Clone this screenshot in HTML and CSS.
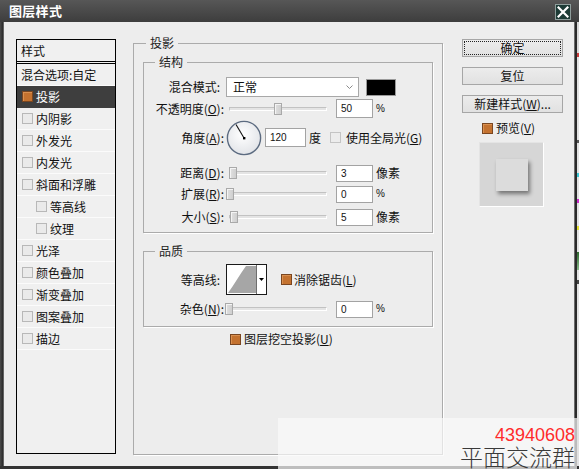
FILE: index.html
```html
<!DOCTYPE html>
<html lang="zh-CN">
<head>
<meta charset="utf-8">
<title>图层样式</title>
<link rel="stylesheet" href="styles.css">
</head>
<body>
<div class="window">
  <header class="titlebar">
    <span class="title">图层样式</span>
    <span class="close"><svg width="12" height="12" viewBox="0 0 12 12"><path d="M1.5 1.5 L10.5 10.5 M10.5 1.5 L1.5 10.5" stroke="#fff" stroke-width="2.2" stroke-linecap="square"/></svg></span>
  </header>
  <div class="frame-row">
    <div class="frame-left"></div>
    <div class="dialog">
      <div class="styles-list">
        <div class="list-head">样式</div>
        <div class="list-item plain">混合选项:自定</div>
        <div class="list-item selected"><span class="cb on"></span>投影</div>
        <div class="list-item"><span class="cb"></span>内阴影</div>
        <div class="list-item"><span class="cb"></span>外发光</div>
        <div class="list-item"><span class="cb"></span>内发光</div>
        <div class="list-item"><span class="cb"></span>斜面和浮雕</div>
        <div class="list-item sub"><span class="cb"></span>等高线</div>
        <div class="list-item sub"><span class="cb"></span>纹理</div>
        <div class="list-item"><span class="cb"></span>光泽</div>
        <div class="list-item"><span class="cb"></span>颜色叠加</div>
        <div class="list-item"><span class="cb"></span>渐变叠加</div>
        <div class="list-item"><span class="cb"></span>图案叠加</div>
        <div class="list-item"><span class="cb"></span>描边</div>
      </div>

      <fieldset class="group drop">
        <legend>投影</legend>
        <fieldset class="group inner struct">
          <legend>结构</legend>
          <div class="row r-blend">
            <span class="lbl lbl-short">混合模式:</span>
            <div class="select"><span>正常</span><svg width="7" height="5" viewBox="0 0 7 5"><path d="M0.5 0.5 L3.5 3.5 L6.5 0.5" fill="none" stroke="#8a8a8a" stroke-width="1"/></svg></div>
            <span class="swatch"></span>
          </div>
          <div class="row r-opacity">
            <span class="lbl">不透明度(<u>O</u>):</span>
            <div class="slider"><span class="track"></span><span class="thumb" style="left:49px"></span></div>
            <span class="num">50</span>
            <span class="unit">%</span>
          </div>
          <div class="row r-angle">
            <span class="lbl">角度(<u>A</u>):</span>
            <svg class="dial" width="36" height="36" viewBox="0 0 36 36">
              <defs><radialGradient id="dg" cx="0.45" cy="0.4" r="0.6"><stop offset="0" stop-color="#ffffff"/><stop offset="1" stop-color="#e2e4e8"/></radialGradient></defs>
              <circle cx="18" cy="18" r="16.6" fill="url(#dg)" stroke="#5c6b80" stroke-width="1.4"/>
              <line x1="18" y1="18" x2="10" y2="4.5" stroke="#111" stroke-width="1.1"/>
              <rect x="17" y="17" width="2.4" height="2.4" fill="#000"/>
            </svg>
            <span class="num wide">120</span>
            <span class="unit deg">度</span>
            <span class="cb grey"></span>
            <span class="glob">使用全局光(<u>G</u>)</span>
          </div>
          <div class="row r-dist">
            <span class="lbl">距离(<u>D</u>):</span>
            <div class="slider"><span class="track"></span><span class="thumb" style="left:4px"></span></div>
            <span class="num">3</span>
            <span class="unit">像素</span>
          </div>
          <div class="row r-spread">
            <span class="lbl">扩展(<u>R</u>):</span>
            <div class="slider"><span class="track"></span><span class="thumb" style="left:1px"></span></div>
            <span class="num">0</span>
            <span class="unit">%</span>
          </div>
          <div class="row r-size">
            <span class="lbl">大小(<u>S</u>):</span>
            <div class="slider"><span class="track"></span><span class="thumb" style="left:5px"></span></div>
            <span class="num">5</span>
            <span class="unit">像素</span>
          </div>
        </fieldset>

        <fieldset class="group inner quality">
          <legend>品质</legend>
          <div class="row r-contour">
            <span class="lbl lbl-short">等高线:</span>
            <div class="contour">
              <svg width="39" height="29" viewBox="0 0 39 29">
                <rect x="0" y="0" width="39" height="29" fill="#fff"/>
                <path d="M1 28 C7 20 13 9 19 1 L29 1 L29 28 Z" fill="#a6a6a6"/>
                <line x1="29.5" y1="0" x2="29.5" y2="29" stroke="#6e6e6e" stroke-width="1"/>
                <path d="M32 13 L37 13 L34.5 16 Z" fill="#000"/>
              </svg>
            </div>
            <span class="cb on c-anti"></span>
            <span class="anti">消除锯齿(<u>L</u>)</span>
          </div>
          <div class="row r-noise">
            <span class="lbl">杂色(<u>N</u>):</span>
            <div class="slider"><span class="track"></span><span class="thumb" style="left:0px"></span></div>
            <span class="num">0</span>
            <span class="unit">%</span>
          </div>
        </fieldset>

        <div class="row r-knock">
          <span class="cb on"></span>
          <span class="knock">图层挖空投影(<u>U</u>)</span>
        </div>
      </fieldset>

      <div class="side">
        <button class="btn focus"><span>确定</span></button>
        <button class="btn">复位</button>
        <button class="btn">新建样式(<u>W</u>)...</button>
        <div class="preview-row"><span class="cb on"></span><span class="pv">预览(<u>V</u>)</span></div>
        <div class="preview-box"><span class="preview-square"></span></div>
      </div>
    </div>
    <div class="frame-right"></div>
    <div class="strip"></div>
  </div>
  <div class="frame-bottom"></div>

  <div class="watermark">
    <span class="wm-num">43940608</span>
    <span class="wm-text">平面交流群</span>
  </div>
</div>
</body>
</html>
```

FILE: styles.css
```css
* { box-sizing: border-box; }
html, body { margin: 0; padding: 0; }
body {
  width: 579px;
  height: 469px;
  overflow: hidden;
  background: #2f2f2f;
  font-family: "Noto Sans CJK SC", "Noto Sans", sans-serif;
  font-size: 12px;
  color: #111;
}
u { text-decoration: underline; text-underline-offset: 1px; }

.window {
  position: relative;
  width: 579px;
  height: 469px;
  display: flex;
  flex-direction: column;
  background: #3a3a3a;
  overflow: hidden;
}

.titlebar {
  height: 22px;
  flex: none;
  display: flex;
  align-items: center;
  justify-content: space-between;
  padding: 0 8px 0 9px;
  background: linear-gradient(#575757, #3d3d3d);
}
.title {
  color: #fff;
  font-weight: bold;
  font-size: 13px;
  line-height: 16px;
  letter-spacing: 0.3px;
}
.close {
  width: 16px;
  height: 16px;
  margin-top: 2px;
  background: #1d3b36;
  border: 1px solid #8e9d9b;
  display: flex;
  align-items: center;
  justify-content: center;
}

.frame-row {
  height: 444px;
  flex: none;
  display: flex;
}
.frame-left {
  width: 4px;
  background: linear-gradient(to right, #4b4b4b, #2c2c2c 70%, #8a8a8a);
}
.frame-right {
  width: 3px;
  background: linear-gradient(to right, #9a9a9a, #2a2a2a 40%, #2a2a2a);
}
.strip {
  width: 2px;
  background: linear-gradient(to bottom,
    #d8d8d8 0, #d8d8d8 31px, #c83a3a 31px, #c83a3a 35px,
    #e2e2e2 35px, #e2e2e2 118px, #555 118px, #555 121px,
    #e2e2e2 121px, #e2e2e2 151px, #3cc8d6 151px, #3cc8d6 155px,
    #e2e2e2 155px, #e2e2e2 177px, #cc2ccc 177px, #cc2ccc 181px,
    #e2e2e2 181px, #e2e2e2 204px, #e6e030 204px, #e6e030 208px,
    #e2e2e2 208px, #e2e2e2 230px, #2f6a2f 230px, #8ab88a 248px,
    #e2e2e2 248px, #e2e2e2 258px, #444 258px, #444 262px, #e2e2e2 262px);
}
.frame-bottom {
  height: 3px;
  flex: none;
  background: #333;
}

.dialog {
  width: 570px;
  background: #ededed;
  display: flex;
  align-items: flex-start;
}

/* style list */
.styles-list {
  width: 100px;
  height: 415px;
  margin: 17px 0 0 12px;
  border: 1px solid #000;
  background: #f0f0f0;
  flex: none;
}
.list-head {
  height: 24px;
  line-height: 21px;
  padding-left: 4px;
  border-bottom: 3px double #000;
}
.list-item {
  height: 22px;
  line-height: 21px;
  border-bottom: 1px solid #fbfbfb;
  padding-left: 5px;
  display: flex;
  align-items: center;
  white-space: nowrap;
}
.list-item.plain { padding-left: 4px; }
.list-item.sub { padding-left: 19px; }
.list-item.selected {
  background: #3e3e3e;
  color: #fff;
  border-bottom-color: #3e3e3e;
}
.list-item .cb { margin-right: 4px; }

.cb {
  width: 11px;
  height: 11px;
  flex: none;
  border: 1px solid #b8b8b8;
  background: #eaeaea;
  display: inline-block;
}
.list-item .cb { margin-right: 3px; }
.cb.on {
  background: #c4722f;
  border-color: #7a4620;
  box-shadow: inset 1px 1px 0 #d99050;
}
.cb.grey {
  border-color: #c4c4c4;
  background: #ececec;
}

/* group boxes */
.group {
  margin: 0;
  padding: 0 9px;
  min-width: 0;
  border: 1px solid #ababab;
  box-shadow: 1px 1px 0 #fff;
}
.group > legend {
  padding: 0 4px;
  margin-left: 3px;
  line-height: 14px;
  font-size: 12px;
  color: #222;
}
.drop {
  width: 310px;
  height: 419px;
  margin: 14px 0 0 17px;
  flex: none;
}
.inner {
  padding: 0;
}
.inner > legend { margin-left: 11px; }
.struct { margin-top: 5px; padding-bottom: 6px; }
.quality { margin-top: 11px; padding-bottom: 8px; }

.row {
  display: flex;
  align-items: center;
  white-space: nowrap;
}
.lbl {
  width: 80px;
  flex: none;
  text-align: right;
  line-height: 14px;
}
.lbl-short { padding-right: 4px; }

.r-blend { margin-top: 8px; height: 20px; }
.r-opacity { margin-top: 2px; height: 19px; }
.r-angle { margin-top: 1px; height: 37px; }
.r-dist { margin-top: 8px; height: 18px; }
.r-spread { margin-top: 3px; height: 18px; }
.r-size { margin-top: 5px; height: 18px; }
.r-contour { margin-top: 6px; height: 31px; }
.r-noise { margin-top: 5px; height: 18px; }
.r-knock { margin-top: 4px; height: 16px; padding-left: 87px; }

.select {
  width: 133px;
  height: 20px;
  margin-left: 2px;
  border: 1px solid #a8a8a8;
  background: #fff;
  display: flex;
  align-items: center;
  justify-content: space-between;
  padding: 0 5px 0 6px;
  line-height: 14px;
}
.swatch {
  width: 30px;
  height: 17px;
  margin-left: 7px;
  background: #000;
  border: 1px solid #9a9a9a;
  flex: none;
}

.slider {
  position: relative;
  width: 106px;
  height: 12px;
  margin-left: 1px;
  flex: none;
}
.track {
  position: absolute;
  left: 4px;
  right: 4px;
  top: 4px;
  height: 4px;
  border: 1px solid #c2c2c2;
  border-bottom-color: #fff;
  border-right-color: #fff;
  background: #e4e4e4;
}
.thumb {
  position: absolute;
  top: 0;
  width: 8px;
  height: 12px;
  border: 1px solid #a9a9a9;
  background: linear-gradient(to right, #e0e0e0, #cfcfcf);
  box-shadow: inset 1px 1px 0 #f4f4f4;
}

.num {
  width: 37px;
  height: 19px;
  margin-left: 5px;
  flex: none;
  border: 1px solid #a3a3a3;
  background: #fff;
  font-family: "Liberation Sans", Arial, sans-serif;
  font-size: 10px;
  line-height: 17px;
  padding-left: 4px;
}
.r-dist .num, .r-spread .num, .r-size .num, .r-noise .num { height: 17px; line-height: 15px; }
.num.wide { width: 41px; margin-left: 3px; }
.unit { margin-left: 3px; line-height: 14px; }
.r-opacity .unit, .r-spread .unit, .r-noise .unit {
  font-family: "Liberation Sans", Arial, sans-serif;
  font-size: 10px;
}
.dial { margin-left: 2px; flex: none; }
.unit.deg { margin-left: 3px; }
.r-angle .cb { margin-left: 9px; }
.glob { margin-left: 5px; line-height: 14px; }

.contour {
  width: 41px;
  height: 31px;
  margin-left: 2px;
  border: 1px solid #1a1a1a;
  flex: none;
  display: flex;
}
.contour svg { display: block; }
.c-anti { margin-left: 14px; }
.anti { margin-left: 2px; line-height: 14px; }
.knock { margin-left: 3px; line-height: 14px; }

/* right column */
.side {
  width: 101px;
  margin: 17px 0 0 19px;
  flex: none;
  display: flex;
  flex-direction: column;
}
.btn {
  height: 18px;
  margin: 0 0 10px 0;
  padding: 0;
  border: 1px solid #a6a6a6;
  background: linear-gradient(#ececec, #e1e1e1);
  font-family: "Noto Sans CJK SC", "Noto Sans", sans-serif;
  font-size: 12px;
  line-height: 14px;
  color: #111;
  display: flex;
  align-items: center;
  justify-content: center;
}
.btn.focus { padding: 1px; }
.btn.focus span {
  flex: 1;
  align-self: stretch;
  border: 1px dotted #222;
  display: flex;
  align-items: center;
  justify-content: center;
}
.preview-row {
  margin-top: -1px;
  height: 12px;
  padding-left: 20px;
  display: flex;
  align-items: center;
}
.pv { margin-left: 3px; line-height: 14px; }
.preview-box {
  width: 65px;
  height: 65px;
  margin: 8px 0 0 17px;
  background: #d6d6d6;
  border: 1px solid #e4e4e4;
  border-right-color: #fff;
  border-bottom-color: #fff;
  padding: 16px 0 0 16px;
}
.preview-square {
  display: block;
  width: 32px;
  height: 32px;
  background: #dcdcdc;
  box-shadow: 2px 3px 4px rgba(0, 0, 0, 0.45);
}

/* watermark overlay */
.watermark {
  position: absolute;
  left: 278px;
  top: 418px;
  width: 299px;
  height: 51px;
  background: rgba(250, 250, 250, 0.7);
  display: flex;
  flex-direction: column;
  align-items: flex-end;
  padding-right: 2px;
  overflow: hidden;
}
.wm-num {
  margin-top: 9px;
  font-family: "Liberation Sans", Arial, sans-serif;
  font-size: 18px;
  line-height: 16px;
  color: #ff2b2b;
}
.wm-text {
  margin-top: 1px;
  font-family: "Noto Sans CJK SC", sans-serif;
  font-weight: 300;
  font-size: 23px;
  line-height: 25px;
  color: #3a3a3a;
}
```
